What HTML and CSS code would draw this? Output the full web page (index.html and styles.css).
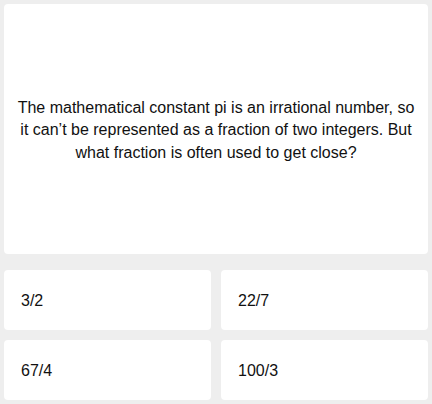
FILE: index.html
```html
<!DOCTYPE html>
<html lang="en">
<head>
  <meta charset="UTF-8" />
  <meta name="viewport" content="width=device-width, initial-scale=1.0">
  <title>Pi Quiz</title>
  <link rel="stylesheet" href="styles.css">
</head>
<body>

  <main class="quiz">
    <div class="question">
      <p>The mathematical constant pi is an irrational number, so it can’t be represented as a fraction of two integers. But what fraction is often used to get close?</p>
    </div>

    <div class="answers">
      <button class="answer">3/2</button>
      <button class="answer">22/7</button>
      <button class="answer">67/4</button>
      <button class="answer">100/3</button>
    </div>
  </main>

</body>
</html>
```

FILE: styles.css
```css
  body {
    font-family: "Liberation Sans", Arial, sans-serif;
    background: #eeeeee;
    margin: 0;
    padding: 4px;
    color: #111;
  }

  .quiz {
    display: flex;
    flex-direction: column;
    gap: 16px;
  }

  .question {
    background: #fff;
    border-radius: 4px;
    height: 250px;
    padding: 3px 12px 0;
    display: flex;
    align-items: center;
    justify-content: center;
    box-sizing: border-box;
  }

  .question p {
    margin: 0;
    font-size: 16px;
    line-height: 22.4px;
    text-align: center;
  }

  .answers {
    display: grid;
    grid-template-columns: 1fr 1fr;
    gap: 10px;
  }

  .answer {
    background: #fff;
    border: none;
    border-radius: 4px;
    height: 60px;
    padding: 1px 16px 0 17px;
    font-family: inherit;
    font-size: 16px;
    color: #111;
    text-align: left;
    cursor: pointer;
  }
```
